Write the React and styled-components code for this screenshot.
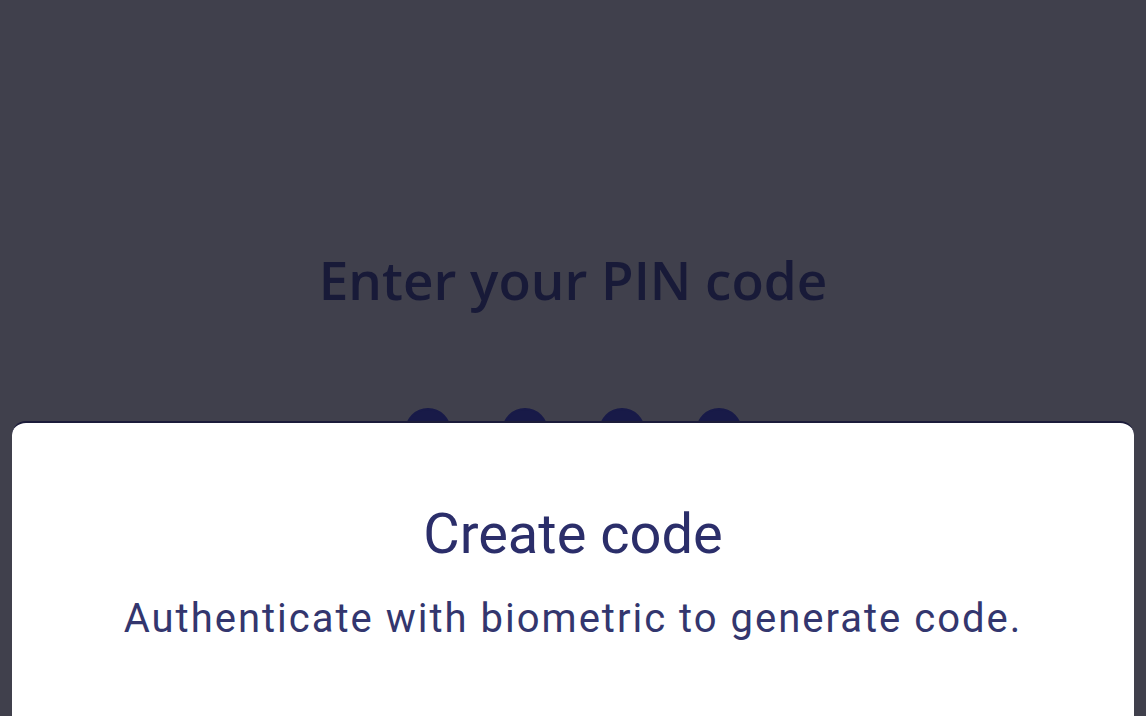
import styled, { createGlobalStyle } from 'styled-components';

const Global = createGlobalStyle`
  html, body { margin: 0; padding: 0; }
  body { background: #40404c; }
`;

const Screen = styled.div`
  position: relative;
  width: 100%;
  height: 716px;
  overflow: hidden;
  background: #40404c;
  display: flex;
  flex-direction: column;
  align-items: center;
`;

const PinArea = styled.div`
  display: flex;
  flex-direction: column;
  align-items: center;
  padding-top: 248px;
`;

const PinTitle = styled.h1`
  margin: 0;
  font-family: "Open Sans", Lato, sans-serif;
  font-weight: 600;
  font-size: 53px;
  line-height: 64px;
  color: #181a38;
`;

const Dots = styled.div`
  display: flex;
  gap: 51px;
  margin-top: 96px;
`;

const Dot = styled.span`
  width: 46px;
  height: 46px;
  border-radius: 50%;
  background: ${(p) => (p.filled ? '#181a48' : 'transparent')};
  border: 2px solid #181a48;
  box-sizing: border-box;
`;

const Sheet = styled.div`
  position: absolute;
  left: 12px;
  right: 12px;
  top: 421px;
  bottom: -30px;
  background: #fff;
  border-radius: 14px;
  border-top: 2px solid #1c1c3a;
  display: flex;
  flex-direction: column;
  align-items: center;
  padding-top: 78px;
`;

const SheetTitle = styled.h2`
  margin: 0;
  font-family: Roboto, "Liberation Sans", sans-serif;
  font-weight: 400;
  font-size: 56px;
  line-height: 66px;
  color: #2b2e6a;
`;

const SheetText = styled.p`
  margin: 29px 0 0;
  font-family: Roboto, "Liberation Sans", sans-serif;
  font-weight: 400;
  font-size: 40px;
  line-height: 46px;
  letter-spacing: 2px;
  color: #33366e;
`;

export default function App() {
  return (
    <>
      <Global />
      <Screen>
        <PinArea>
          <PinTitle>Enter your PIN code</PinTitle>
          <Dots>
            <Dot filled />
            <Dot filled />
            <Dot filled />
            <Dot filled />
          </Dots>
        </PinArea>
        <Sheet>
          <SheetTitle>Create code</SheetTitle>
          <SheetText>Authenticate with biometric to generate code.</SheetText>
        </Sheet>
      </Screen>
    </>
  );
}
